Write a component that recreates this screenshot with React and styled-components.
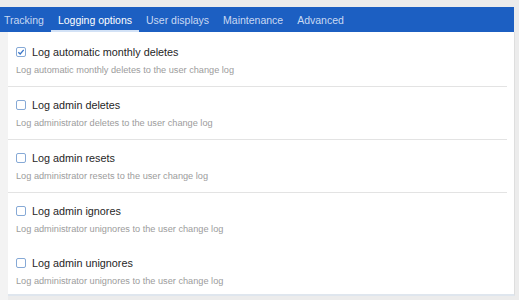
import React from "react";
import styled, { createGlobalStyle } from "styled-components";

const Global = createGlobalStyle`
  html, body { margin: 0; padding: 0; }
  body {
    background: #ececec;
    font-family: "Liberation Sans", Arial, Helvetica, sans-serif;
    width: 519px;
    height: 300px;
    overflow: hidden;
  }
`;

const Page = styled.div`
  padding-top: 7px;
  width: 514px;
`;

const TabBar = styled.nav`
  display: flex;
  height: 25px;
  background: #1c5fc2;
  margin-left: -3px;
`;

const Tab = styled.div`
  display: flex;
  align-items: center;
  padding: 0 7px;
  font-size: 10.5px;
  color: ${(p) => (p.$active ? "#ffffff" : "#c9d9f2")};
  box-shadow: ${(p) => (p.$active ? "inset 0 -2px 0 #d3e2f6" : "none")};
  white-space: nowrap;
`;

const Body = styled.div`
  display: flex;
  height: 268px;
`;

const Gutter = styled.div`
  width: 8px;
  background: #f3f3f3;
`;

const Panel = styled.section`
  flex: 1;
  background: #ffffff;
  padding-top: 2px;
  border-right: 1px solid #dedede;
  border-bottom: 2px solid #dfe6ee;
  margin-right: -1px;
  height: 260px;
`;

const Row = styled.div`
  padding: 10px 8px 9px;
  margin-right: 7px;
  border-bottom: ${(p) => (p.$divider ? "1px solid #e3e3e3" : "none")};
`;

const TitleLine = styled.label`
  display: flex;
  align-items: center;
  gap: 6px;
  height: 16px;
  font-size: 10.8px;
  color: #1f1f1f;
`;

const Box = styled.span`
  box-sizing: border-box;
  width: 10px;
  height: 10px;
  border: 1.5px solid #86a9d6;
  border-radius: 2px;
  display: flex;
  align-items: center;
  justify-content: center;
  background: #fff;
`;

const Desc = styled.div`
  margin-top: 3px;
  line-height: 14px;
  font-size: 9.2px;
  color: #9c9c9c;
`;

const Check = ({ checked }) => (
  <Box>
    {checked && (
      <svg width="8" height="8" viewBox="0 0 8 8">
        <path d="M1.3 4.2 L3.2 6 L6.7 1.8" fill="none" stroke="#3a76c8" strokeWidth="1.3" />
      </svg>
    )}
  </Box>
);

const tabs = ["Tracking", "Logging options", "User displays", "Maintenance", "Advanced"];

const rows = [
  { t: "Log automatic monthly deletes", d: "Log automatic monthly deletes to the user change log", c: true, div: true },
  { t: "Log admin deletes", d: "Log administrator deletes to the user change log", div: true },
  { t: "Log admin resets", d: "Log administrator resets to the user change log", div: true },
  { t: "Log admin ignores", d: "Log administrator unignores to the user change log" },
  { t: "Log admin unignores", d: "Log administrator unignores to the user change log" },
];

export default function App() {
  return (
    <>
      <Global />
      <Page>
        <TabBar>
          {tabs.map((t) => (
            <Tab key={t} $active={t === "Logging options"}>{t}</Tab>
          ))}
        </TabBar>
        <Body>
          <Gutter />
          <Panel>
            {rows.map((r) => (
              <Row key={r.t} $divider={r.div}>
                <TitleLine>
                  <Check checked={r.c} />
                  {r.t}
                </TitleLine>
                <Desc>{r.d}</Desc>
              </Row>
            ))}
          </Panel>
        </Body>
      </Page>
    </>
  );
}
